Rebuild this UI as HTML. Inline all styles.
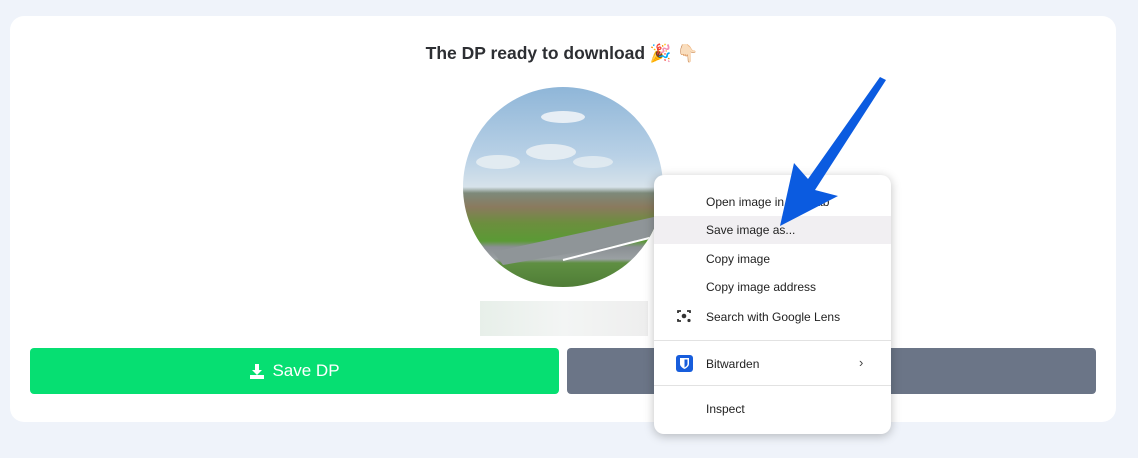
<!DOCTYPE html>
<html><head><meta charset="utf-8"><style>
*{margin:0;padding:0;box-sizing:border-box}
body{width:1138px;height:458px;background:#eff3fa;position:relative;overflow:hidden;font-family:"Liberation Sans",sans-serif}
.card{position:absolute;left:10px;top:16px;width:1106px;height:406px;background:#fff;border-radius:14px}
.title{position:absolute;left:0;width:1124px;top:43px;text-align:center;font-weight:bold;font-size:17.5px;color:#2d2f33}
.circle{position:absolute;left:463px;top:87px;width:200px;height:200px;border-radius:50%;overflow:hidden;
background:linear-gradient(180deg,#8fb6d8 0%,#b9d1e6 35%,#d6e2ea 50%,#7d8a7a 53%,#8a7a5e 60%,#6c8e3e 68%,#5b9a35 77%,#8a8f93 80%,#9aa0a3 86%,#5f8f42 88%,#4f7d36 100%)}
.blur{position:absolute;left:480px;top:301px;width:168px;height:35px;background:linear-gradient(90deg,#e7efe9,#f3f5f4,#eeeeee)}
.btn{position:absolute;top:348px;height:46px;border-radius:4px}
.g{left:30px;width:529px;background:#06df72;color:#fff;font-size:17px;display:flex;align-items:center;justify-content:center;gap:7px}
.gr{left:567px;width:529px;background:#6b7587}
.menu{position:absolute;left:654px;top:175px;width:237px;height:259px;background:#fff;border-radius:10px;box-shadow:0 2px 10px rgba(0,0,0,.25);font-family:"Liberation Sans",sans-serif;font-size:12px;color:#222}
.it{position:absolute;left:52px}
.hl{position:absolute;left:0;right:0;top:41px;height:28px;background:#f1eff2}
.sep{position:absolute;left:0;right:0;height:1px;background:#e2e2e2}
</style></head><body>
<div class="card"></div>
<div class="title">The DP ready to download 🎉 👇🏻</div>
<div class="circle">
<svg width="200" height="200" style="position:absolute;left:0;top:0">
<ellipse cx="100" cy="30" rx="22" ry="6" fill="#eef3f7" opacity=".9"/>
<ellipse cx="88" cy="65" rx="25" ry="8" fill="#e8eef3" opacity=".9"/>
<ellipse cx="35" cy="75" rx="22" ry="7" fill="#e6edf2" opacity=".9"/>
<ellipse cx="130" cy="75" rx="20" ry="6" fill="#e6edf2" opacity=".8"/>
<path d="M30 165 L200 128 L200 150 L40 178 Z" fill="#8f9598"/>
<path d="M100 173 L190 150" stroke="#fff" stroke-width="2"/>
</svg></div>
<div class="blur"></div>
<div class="btn g"><svg width="16" height="16" viewBox="0 0 16 16"><path d="M6 1h4v6h3l-5 5-5-5h3z" fill="#fff"/><rect x="1" y="12" width="14" height="4" fill="#fff"/></svg><span>Save DP</span></div>
<div class="btn gr"></div>
<div class="menu">
<div class="hl"></div>
<div class="it" style="top:20px">Open image in new tab</div>
<div class="it" style="top:48px">Save image as...</div>
<div class="it" style="top:77px">Copy image</div>
<div class="it" style="top:105px">Copy image address</div>
<svg style="position:absolute;left:22px;top:133px" width="16" height="16" viewBox="0 0 16 16"><path d="M2 5V3h3M14 5V3h-3M2 11v2h3" stroke="#333" stroke-width="1.8" fill="none"/><circle cx="8" cy="8" r="2.3" fill="#333"/><circle cx="13" cy="12.5" r="1.6" fill="#333"/></svg>
<div class="it" style="top:135px">Search with Google Lens</div>
<div class="sep" style="top:165px"></div>
<svg style="position:absolute;left:22px;top:180px" width="17" height="17" viewBox="0 0 17 17"><rect width="17" height="17" rx="3" fill="#175ddc"/><path d="M4 3h9v6c0 3-4.5 5-4.5 5S4 12 4 9z" fill="#fff"/><path d="M8.5 4.5h3v4.5c0 2-3 3.5-3 3.5z" fill="#175ddc"/></svg>
<div class="it" style="top:182px">Bitwarden</div>
<div style="position:absolute;left:205px;top:180px;font-size:13px;color:#444">›</div>
<div class="sep" style="top:210px"></div>
<div class="it" style="top:227px">Inspect</div>
</div>
<svg style="position:absolute;left:0;top:0" width="1138" height="458">
<path d="M886 80 L815 190 L838 196 L780 226 L794 163 L808 179 L880 77 Z" fill="#0b5be0"/>
</svg>
</body></html>
